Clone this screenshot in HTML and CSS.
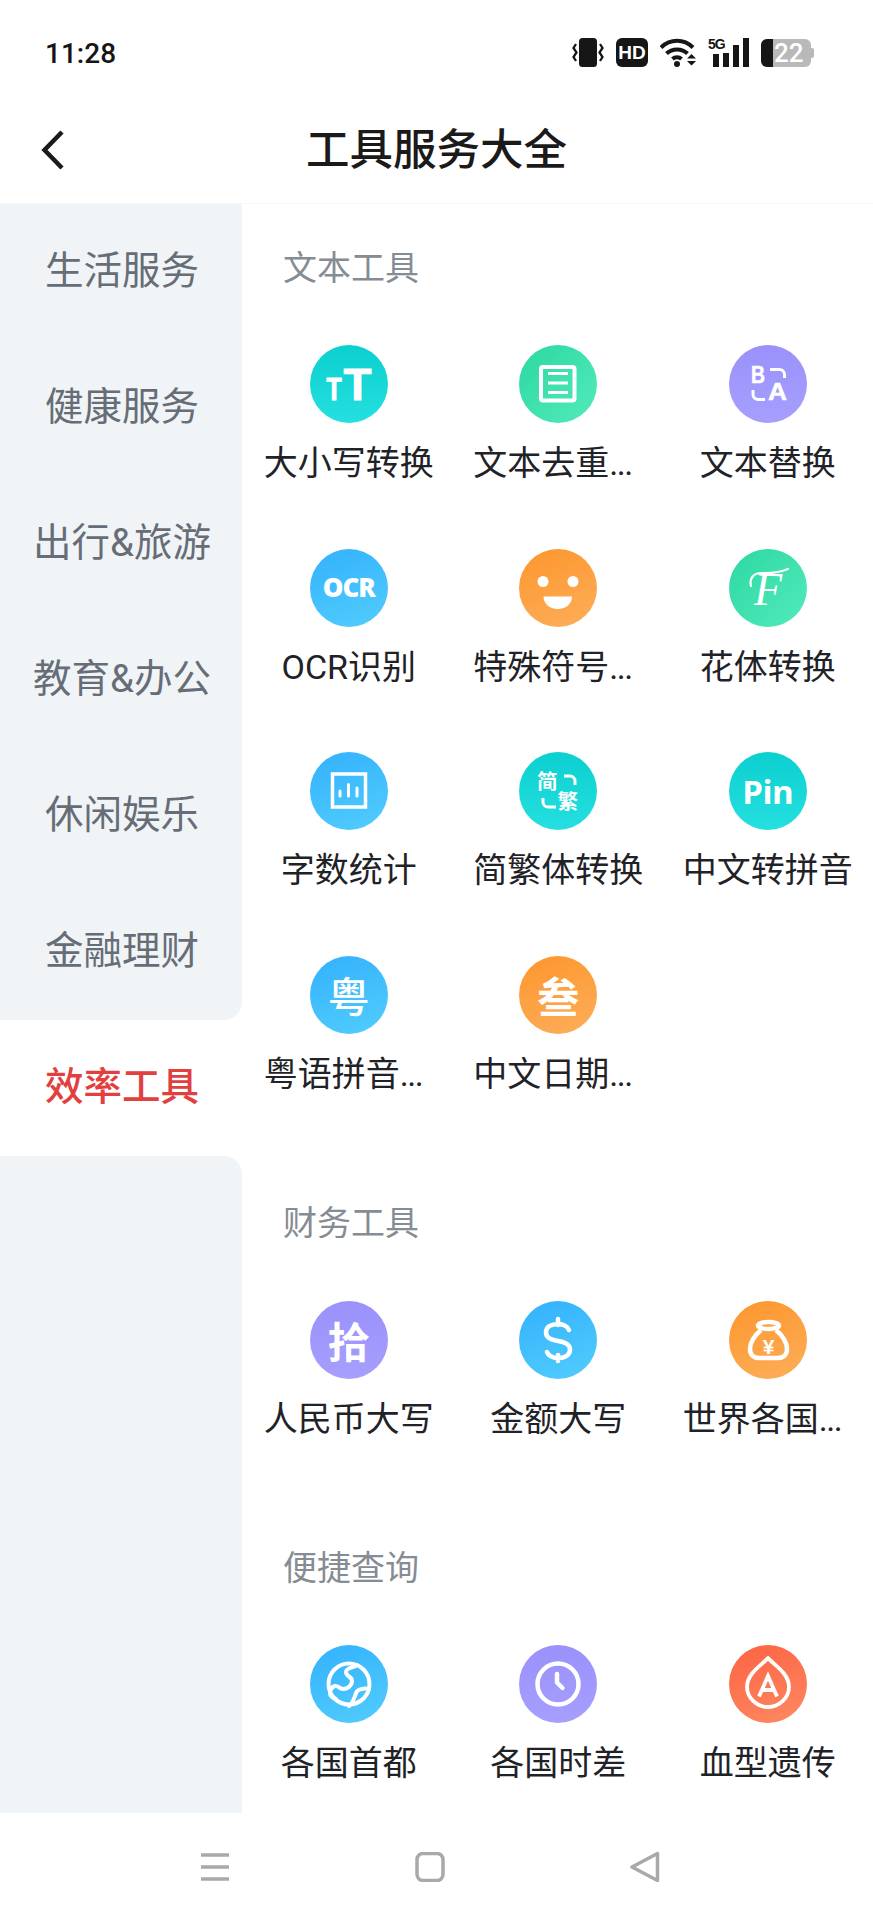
FILE: index.html
```html
<!DOCTYPE html>
<html lang="zh-CN">
<head>
<meta charset="utf-8">
<title>工具服务大全</title>
<link rel="stylesheet" href="styles.css">
</head>
<body>
<div class="app">
  <div class="statusbar">
    <span class="time">11:28</span>
    <div class="status-icons">
      <svg class="si" width="32" height="29" viewBox="0 0 32 29"><rect x="7" y="0" width="18" height="29" rx="3.500" fill="#161616"/><path d="M4 6 1.500 10l3 4.500-3 4.500 2.500 4M28 6l2.500 4-3 4.500 3 4.500-2.500 4" fill="none" stroke="#161616" stroke-width="2.300"/></svg>
      <div class="hd">HD</div>
      <svg class="si" width="36" height="29" viewBox="0 0 36 29"><path d="M1 9.500C10 .5 24 .5 33 9.500M6.500 15.500C12 10 22 10 27.500 15.500M12.500 21C15 18.500 19 18.500 21.500 21" fill="none" stroke="#161616" stroke-width="4"/><circle cx="17" cy="26" r="3" fill="#161616"/><path d="M27 20.500h9l-4.500-4.500zM27 23h9l-4.500 4.500z" fill="#161616"/></svg>
      <div class="signal"><span class="fiveg">5G</span><i class="b1"></i><i class="b2"></i><i class="b3"></i><i class="b4"></i></div>
      <div class="battery"><span class="batt-fill"></span><span class="batt-num">22</span><span class="batt-cap"></span></div>
    </div>
  </div>
  <header class="topbar">
    <svg class="back" width="24" height="40" viewBox="0 0 24 40"><path d="M21 2 3.500 20 21 38" fill="none" stroke="#1a1a1a" stroke-width="4.500"/></svg>
    <h1 class="title">工具服务大全</h1>
  </header>
  <main class="main">
    <nav class="side">
      <div class="side-item">生活服务</div>
      <div class="side-item">健康服务</div>
      <div class="side-item">出行&amp;旅游</div>
      <div class="side-item">教育&amp;办公</div>
      <div class="side-item">休闲娱乐</div>
      <div class="side-item before-active">金融理财</div>
      <div class="side-item active">效率工具</div>
      <div class="side-rest"></div>
    </nav>
    <div class="content">
      <section class="group">
        <h2 class="group-title">文本工具</h2>
        <div class="grid">
          <div class="tool"><div class="ic teal"><svg width="78" height="78" viewBox="0 0 78 78"><text x="16.500" y="55" class="tt-s" textLength="15" lengthAdjust="spacingAndGlyphs">T</text><text x="33.500" y="55" class="tt-l" textLength="28" lengthAdjust="spacingAndGlyphs">T</text></svg></div><span class="name">大小写转换</span></div>
          <div class="tool"><div class="ic green"><svg width="78" height="78" viewBox="0 0 78 78"><rect x="22" y="22" width="33.500" height="33.500" rx="2" fill="none" stroke="#fff" stroke-width="4"/><path d="M29 28.500h20M29 38h20M29 47.500h20" stroke="#fff" stroke-width="3"/></svg></div><span class="name clip">文本去重<span class="dots">...</span></span></div>
          <div class="tool"><div class="ic purple"><svg width="78" height="78" viewBox="0 0 78 78"><text x="22" y="38" class="ba" textLength="14" lengthAdjust="spacingAndGlyphs">B</text><text x="39" y="55" class="ba" textLength="19" lengthAdjust="spacingAndGlyphs">A</text><path d="M41 24.500h9.500a5 5 0 0 1 5 5V33M24 45v4.500a5 5 0 0 0 5 5h7" fill="none" stroke="#fff" stroke-width="3"/></svg></div><span class="name">文本替换</span></div>
          <div class="tool"><div class="ic blue"><span class="ic-txt ocr">OCR</span></div><span class="name">OCR识别</span></div>
          <div class="tool"><div class="ic orange"><svg width="78" height="78" viewBox="0 0 78 78"><circle cx="24" cy="32.500" r="5.500" fill="#fff"/><circle cx="54" cy="32.500" r="5.500" fill="#fff"/><path d="M24.500 47.500h28.500c0 7-6 12.500-14.250 12.500S24.500 54.500 24.500 47.500z" fill="#fff"/></svg></div><span class="name clip">特殊符号<span class="dots">...</span></span></div>
          <div class="tool"><div class="ic green"><svg width="78" height="78" viewBox="0 0 78 78"><text x="39" y="56" class="script">F</text><path d="M22 37c-2-8 3-13 10-13 8 0 15 1 27-4" fill="none" stroke="#fff" stroke-width="2.200" stroke-linecap="round"/></svg></div><span class="name">花体转换</span></div>
          <div class="tool"><div class="ic blue"><svg width="78" height="78" viewBox="0 0 78 78"><rect x="22.500" y="22" width="33" height="33" fill="none" stroke="#fff" stroke-width="3.500"/><path d="M30 39v5M38.500 32.500V44M47 36v8" stroke="#fff" stroke-width="3" stroke-linecap="round"/></svg></div><span class="name">字数统计</span></div>
          <div class="tool"><div class="ic teal"><svg width="78" height="78" viewBox="0 0 78 78"><text x="18" y="37" class="jf">简</text><text x="38.500" y="56.500" class="jf">繁</text><path d="M45 24h6a5 5 0 0 1 5 5v4M24 46v4a5 5 0 0 0 5 5h8" fill="none" stroke="#fff" stroke-width="3"/></svg></div><span class="name">简繁体转换</span></div>
          <div class="tool"><div class="ic teal"><span class="ic-txt pin">Pin</span></div><span class="name">中文转拼音</span></div>
          <div class="tool"><div class="ic blue"><span class="ic-txt han medium">粤</span></div><span class="name clip">粤语拼音<span class="dots">...</span></span></div>
          <div class="tool"><div class="ic orange"><span class="ic-txt han">叁</span></div><span class="name clip">中文日期<span class="dots">...</span></span></div>
        </div>
      </section>
      <section class="group">
        <h2 class="group-title">财务工具</h2>
        <div class="grid">
          <div class="tool"><div class="ic purple"><span class="ic-txt han">拾</span></div><span class="name">人民币大写</span></div>
          <div class="tool"><div class="ic blue"><svg width="78" height="78" viewBox="0 0 78 78"><path d="M50 29c-1-3-5-6-11-6-7 0-12 3-12 8.500s5 7.500 12 8.500 12 3 12 8.500-5 8.500-12 8.500c-6 0-10-3-11-6M39 18v6M39 54v6" fill="none" stroke="#fff" stroke-width="4.500" stroke-linecap="round"/></svg></div><span class="name">金额大写</span></div>
          <div class="tool"><div class="ic orange"><svg width="78" height="78" viewBox="0 0 78 78"><ellipse cx="39.500" cy="24.500" rx="10.500" ry="3.500" fill="none" stroke="#fff" stroke-width="4.500"/><path d="M32 29C25 35 21 42 21 48c0 6 4 9 9 9h19c5 0 9-3 9-9 0-6-4-13-11-19" fill="none" stroke="#fff" stroke-width="4.500"/><text x="39.500" y="53" class="yen">¥</text></svg></div><span class="name clip">世界各国<span class="dots">...</span></span></div>
        </div>
      </section>
      <section class="group">
        <h2 class="group-title">便捷查询</h2>
        <div class="grid">
          <div class="tool"><div class="ic blue"><svg width="78" height="78" viewBox="0 0 78 78"><circle cx="39" cy="39" r="20.500" fill="none" stroke="#fff" stroke-width="4"/><path d="M47 20c-3 3-11 2-11 7s6 4 6 9-5 8-9 8-5-4-8-3-5 4-5 7 3 5 6 6M59 44c-4-1-12 0-13 4s-2 5-3 8-3 4-4 5" fill="none" stroke="#fff" stroke-width="4" stroke-linecap="round"/></svg></div><span class="name">各国首都</span></div>
          <div class="tool"><div class="ic purple"><svg width="78" height="78" viewBox="0 0 78 78"><circle cx="39" cy="39" r="20.500" fill="none" stroke="#fff" stroke-width="4.500"/><path d="M38 29v8.500l5.500 5.500" fill="none" stroke="#fff" stroke-width="4.500" stroke-linecap="round" stroke-linejoin="round"/></svg></div><span class="name">各国时差</span></div>
          <div class="tool"><div class="ic red"><svg width="78" height="78" viewBox="0 0 78 78"><path d="M39 13C33 20 18 28 18 42 18 53 28 62 39 62s21-9 21-20C60 28 45 20 39 13z" fill="none" stroke="#fff" stroke-width="3.800" stroke-linejoin="round"/><path d="M30 51.500 39 31l9 20.500M33 45h12" fill="none" stroke="#fff" stroke-width="3.800"/></svg></div><span class="name">血型遗传</span></div>
        </div>
      </section>
    </div>
  </main>
  <footer class="navbar">
    <svg width="30" height="30" viewBox="0 0 30 30"><path d="M1 3h28M1 15h28M1 27h28" stroke="#a9a9a9" stroke-width="3.600"/></svg>
    <svg width="30" height="30" viewBox="0 0 30 30"><rect x="2" y="1.500" width="26" height="27" rx="6" fill="none" stroke="#a9a9a9" stroke-width="3.500"/></svg>
    <svg width="30" height="32" viewBox="0 0 30 32"><path d="M27.500 2.500v27L2 16z" fill="none" stroke="#a9a9a9" stroke-width="3.500" stroke-linejoin="round"/></svg>
  </footer>
</div>
</body>
</html>
```
FILE: styles.css
```css
* { box-sizing: border-box; }
html, body { margin: 0; padding: 0; background: #fff; }
body {
  font-family: Roboto, "Noto Sans CJK SC", "Noto Sans", sans-serif;
  color: #1f2226;
}
.app { width: 873px; height: 1920px; display: flex; flex-direction: column; overflow: hidden; }

.statusbar {
  height: 87px;
  flex: none;
  display: flex;
  justify-content: space-between;
  padding: 38px 60px 0 45px;
}
.time { font-size: 28px; line-height: 30px; font-weight: 500; color: #161616; padding-top: 1px; }
.status-icons { display: flex; gap: 12px; height: 29px; align-items: center; }
.si { display: block; }
.hd {
  width: 32px; height: 29px; border-radius: 6px; background: #161616; color: #fff;
  font: 700 19px/29px "Liberation Sans", sans-serif; text-align: center;
}
.signal { position: relative; width: 41px; height: 29px; display: flex; align-items: flex-end; gap: 4px; padding-left: 5px; }
.signal i { display: block; width: 6px; background: #161616; }
.b1 { height: 13px; }
.b2 { height: 14px; }
.b3 { height: 22px; }
.b4 { height: 29px; }
.fiveg { position: absolute; left: 0; top: -1px; font: 700 14px/14px "Liberation Sans Narrow", "Liberation Sans", sans-serif; color: #161616; letter-spacing: -1px; }
.battery {
  position: relative; width: 50px; height: 28px; border-radius: 6px;
  background: #b9b9b9; margin-right: 2px;
}
.batt-fill { position: absolute; left: 0; top: 0; bottom: 0; width: 12px; background: #161616; border-radius: 6px 0 0 6px; }
.batt-num { position: absolute; left: 13px; top: 0; font: 500 26px/28px Roboto, sans-serif; color: #fff; }
.batt-cap { position: absolute; right: -3px; top: 9px; width: 3px; height: 10px; background: #b9b9b9; border-radius: 0 2px 2px 0; }

.topbar {
  position: relative;
  height: 117px;
  flex: none;
  display: flex;
  align-items: center;
  justify-content: center;
  border-bottom: 1px solid #f5f6f8;
  padding-top: 11px;
}
.back { position: absolute; left: 41px; top: 43px; }
.title { margin: 0; font-size: 43.500px; line-height: 60px; font-weight: 500; color: #1a1a1a; }

.main { flex: 1; min-height: 0; display: flex; overflow: hidden; }
.side { width: 242px; flex: none; display: flex; flex-direction: column; background: #fff; }
.side-item {
  height: 136px;
  flex: none;
  display: flex;
  align-items: center;
  justify-content: center;
  padding: 0 0 11px 2px;
  background: #f0f4f7;
  font-size: 38.500px;
  color: #676d76;
}
.before-active { border-bottom-right-radius: 18px; }
.active { background: #fff; color: #e2403f; font-weight: 500; }
.side-rest { flex: 1; background: #f0f4f7; border-top-right-radius: 18px; }

.content { flex: 1; min-width: 0; padding-left: 2px; }
.group-title {
  margin: 0;
  padding-left: 39px;
  height: 122px;
  display: flex;
  align-items: center;
  font-size: 34px;
  font-weight: 400;
  color: #868c93;
}
.grid { display: grid; grid-template-columns: repeat(3, 209.500px); grid-auto-rows: 203.670px; margin-top: 19px; }
.tool { display: flex; flex-direction: column; align-items: center; }
.ic {
  width: 78px; height: 78px; border-radius: 50%; flex: none;
  display: flex; align-items: center; justify-content: center; color: #fff;
  overflow: hidden;
}
.ic svg { display: block; }
.teal { background: linear-gradient(180deg, #0ccfcf, #25dfe0); }
.green { background: linear-gradient(135deg, #2cd8a2, #53eabc); }
.purple { background: linear-gradient(180deg, #9a91fb, #a69ffe); }
.blue { background: linear-gradient(160deg, #33b1fd, #52cdfd); }
.orange { background: linear-gradient(160deg, #fd962d, #fdae5a); }
.red { background: linear-gradient(160deg, #fd6242, #fd8a62); }
.name { margin-top: 17px; font-size: 34px; line-height: 46px; white-space: nowrap; color: #1f2226; }
.clip { width: 170px; text-align: left; }
.dots { letter-spacing: -1.500px; }

.ic-txt { color: #fff; line-height: 1; }
.ocr { font: 800 26px/1 "Open Sans", sans-serif; letter-spacing: -1px; margin-bottom: 2px; }
.pin { font: 700 33px/1 "Open Sans", sans-serif; letter-spacing: -0.500px; }
.han { font: 700 42px/1 "Noto Sans CJK SC", sans-serif; }
.medium { font-weight: 500; }
.script { font: italic 400 46px "Liberation Serif", serif; fill: #fff; text-anchor: middle; }
.tt-s { font: 700 31px "Liberation Sans", sans-serif; fill: #fff; stroke: #fff; stroke-width: 1.200px; }
.tt-l { font: 700 45px "Liberation Sans", sans-serif; fill: #fff; stroke: #fff; stroke-width: 0.800px; }
.ba { font: 700 23px "Liberation Sans", sans-serif; fill: #fff; stroke: #fff; stroke-width: 0.500px; }
.jf { font: 700 20.500px "Noto Sans CJK SC", sans-serif; fill: #fff; }
.yen { font: 700 21px "Liberation Sans", sans-serif; fill: #fff; text-anchor: middle; }

.navbar {
  height: 107px;
  flex: none;
  background: #fff;
  display: flex;
  align-items: center;
  padding: 0 213px 0 200px;
  justify-content: space-between;
}
```
